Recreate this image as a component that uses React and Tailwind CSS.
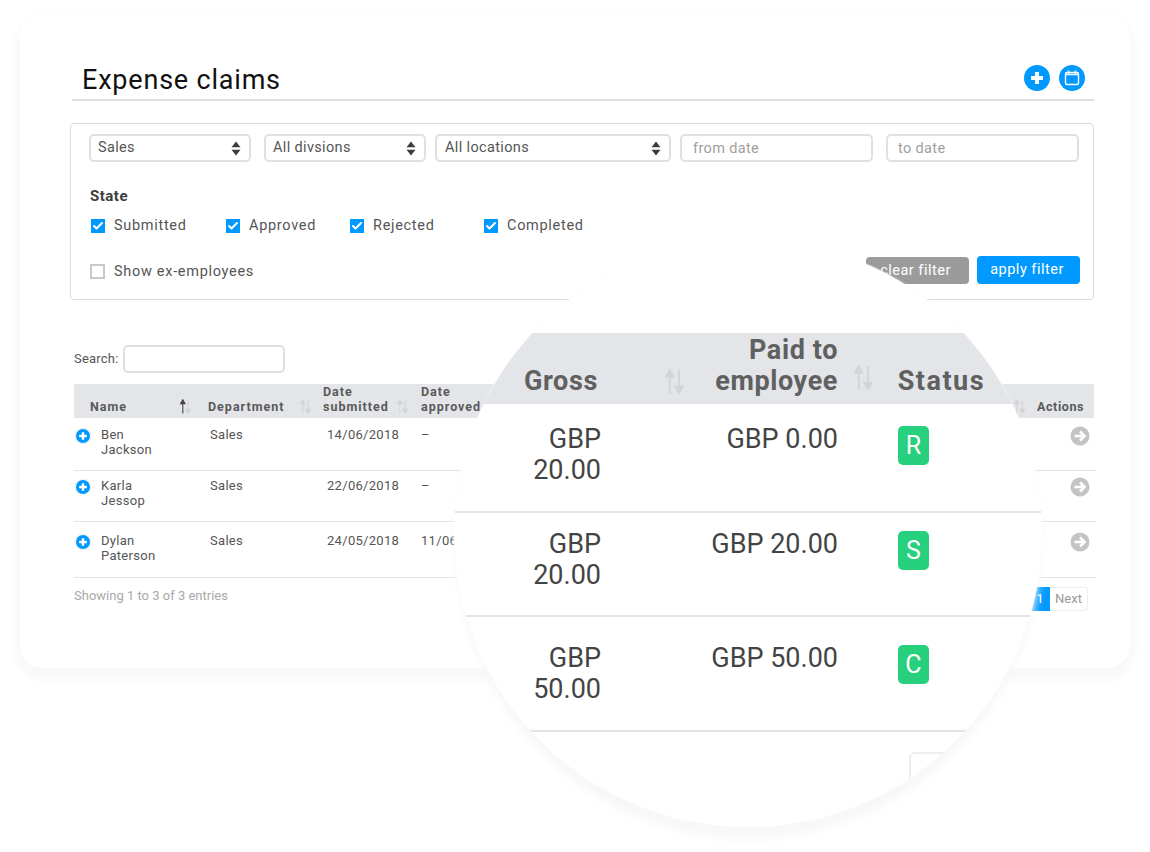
import { Check } from "lucide-react";

const font = { fontFamily: "Roboto, 'Open Sans', sans-serif" };

function SelectArrows() {
  return (
    <svg width="10" height="15" viewBox="0 0 10 15" className="shrink-0">
      <path d="M5 0.5 L9.5 6.3 H0.5 Z M5 14.5 L0.5 8.7 H9.5 Z" fill="#3d3d3d" />
    </svg>
  );
}

function SortIcon({ size = 1, up = "#d2d4d6", down = "#d2d4d6" }) {
  return (
    <svg width={11 * size} height={15 * size} viewBox="0 0 11 15" className="shrink-0">
      <path d="M2.8 14.5 V3 M0.6 4.6 L2.8 0.8 L5 4.6 Z" stroke={up} strokeWidth="1.1" fill={up} />
      <path d="M8.2 0.5 V12 M6 10.4 L8.2 14.2 L10.4 10.4 Z" stroke={down} strokeWidth="1.1" fill={down} />
    </svg>
  );
}

function FakeSelect({ label, className }) {
  return (
    <div className={`flex h-[28px] items-center justify-between rounded-[5px] border-2 border-[#e0e0e0] pl-[7px] pr-[8px] text-[14.5px] tracking-[0.35px] text-[#555] ${className}`}>
      <span>{label}</span>
      <SelectArrows />
    </div>
  );
}

function Tick({ label, className }) {
  return (
    <div className={`flex items-center ${className}`}>
      <span className="flex h-[14px] w-[14px] items-center justify-center bg-[#0099ff]">
        <Check size={12} strokeWidth={4} color="white" />
      </span>
      <span className="ml-[9px] text-[14.5px] tracking-[0.7px] text-[#555]">{label}</span>
    </div>
  );
}

function RowPlus() {
  return (
    <svg width="18" height="18" viewBox="0 0 18 18" className="shrink-0">
      <circle cx="9" cy="9" r="8.5" fill="#f0f2f4" />
      <circle cx="9" cy="9" r="7" fill="#0099ff" />
      <path d="M9 5.2 V12.8 M5.2 9 H12.8" stroke="white" strokeWidth="2.4" />
    </svg>
  );
}

function RowArrow() {
  return (
    <svg width="20" height="20" viewBox="0 0 20 20">
      <circle cx="10" cy="10" r="9.5" fill="#c4c4c4" />
      <path d="M4.5 10 H14 M10 5.5 L14.5 10 L10 14.5" stroke="white" strokeWidth="2.6" fill="none" />
    </svg>
  );
}

const tableCols = "grid grid-cols-[134px_115px_98px_604px_1fr]";

const rows = [
  { first: "Ben", last: "Jackson", sub: "14/06/2018", appr: "–", h: "h-[53px] pt-[9px]" },
  { first: "Karla", last: "Jessop", sub: "22/06/2018", appr: "–", h: "h-[51px] pt-[7px]" },
  { first: "Dylan", last: "Paterson", sub: "24/05/2018", appr: "11/06/2018", h: "h-[56px] pt-[11px]" },
];

const zoomRows = [
  { gross: "20.00", paid: "GBP 0.00", state: "R", h: "h-[109px] pt-[20px]" },
  { gross: "20.00", paid: "GBP 20.00", state: "S", h: "h-[104px] pt-[16px]" },
  { gross: "50.00", paid: "GBP 50.00", state: "C", h: "h-[115px] pt-[26px]" },
];

function ExpenseCard() {
  return (
    <div className="ml-[20px] mt-[14px] h-[654px] w-[1110px] rounded-[24px] bg-white pl-[50px] pt-[44px] shadow-[0_7px_8px_5px_#f8f9f9]">
      {/* Header */}
      <div className="ml-[2px] flex h-[43px] w-[1022px] items-start justify-between border-b-2 border-[#dfdfdf] pl-[10px] pr-[9px]">
        <h1 className="text-[27px] leading-[44px] tracking-[0.8px] text-[#111]">Expense claims</h1>
        <div className="mt-[7px] flex gap-[9px]">
          <svg width="26" height="26" viewBox="0 0 26 26">
            <circle cx="13" cy="13" r="13" fill="#0099ff" />
            <path d="M13 7 V19 M7 13 H19" stroke="white" strokeWidth="4" />
          </svg>
          <svg width="26" height="26" viewBox="0 0 26 26">
            <circle cx="13" cy="13" r="13" fill="#0099ff" />
            <rect x="6.5" y="7.5" width="13" height="12" rx="1.5" stroke="white" strokeWidth="1.4" fill="none" />
            <path d="M9.5 5.5 V8.5 M16.5 5.5 V8.5 M6.5 9.5 H19.5" stroke="white" strokeWidth="1.4" />
          </svg>
        </div>
      </div>

      {/* Filters */}
      <div className="mt-[22px] h-[177px] w-[1024px] rounded-[4px] border border-[#dcdcdc] pl-[18px] pt-[10px]">
        <div className="flex">
          <FakeSelect label="Sales" className="w-[162px]" />
          <FakeSelect label="All divsions" className="ml-[13px] w-[162px]" />
          <FakeSelect label="All locations" className="ml-[9px] w-[236px] pl-[8px]" />
          <input placeholder="from date" className="ml-[9px] h-[28px] w-[193px] rounded-[5px] border-2 border-[#e0e0e0] px-[11px] text-[14.5px] tracking-[0.35px] placeholder:text-[#a0a0a0]" />
          <input placeholder="to date" className="ml-[13px] h-[28px] w-[193px] rounded-[5px] border-2 border-[#e0e0e0] px-[10px] text-[14.5px] tracking-[0.35px] placeholder:text-[#a0a0a0]" />
        </div>
        <div className="ml-px mt-[25px] text-[15px] font-bold leading-[18px] tracking-[0.5px] text-[#3d3d3d]">State</div>
        <div className="ml-[2px] mt-[11px] flex h-[20px]">
          <Tick label="Submitted" className="w-[135px]" />
          <Tick label="Approved" className="w-[124px]" />
          <Tick label="Rejected" className="w-[134px]" />
          <Tick label="Completed" />
        </div>
        <div className="flex items-start justify-between pr-[13px]">
          <div className="ml-px mt-[25px] flex items-center">
            <span className="h-[15px] w-[15px] border-2 border-[#c9c9c9]" />
            <span className="ml-[9px] text-[14.5px] tracking-[0.7px] text-[#555]">Show ex-employees</span>
          </div>
          <div className="mt-[20px] flex gap-[8px]">
            <button className="mt-px h-[27px] w-[103px] rounded-[4px] bg-[#9b9b9b] pr-[4px] text-[14.5px] tracking-[0.5px] text-white">clear filter</button>
            <button className="h-[28px] w-[103px] rounded-[4px] bg-[#0099ff] pr-[3px] text-[14.5px] tracking-[0.5px] text-white">apply filter</button>
          </div>
        </div>
      </div>

      {/* Table */}
      <div className="ml-[4px] mt-[45px] flex items-center">
        <span className="text-[13px] tracking-[0.2px] text-[#555]">Search:</span>
        <input className="ml-[5px] h-[28px] w-[162px] rounded-[5px] border-2 border-[#e0e0e0]" />
      </div>
      <div className="ml-[4px] mt-[11px] w-[1022px]">
        <div className={`${tableCols} h-[34px] w-[1020px] items-end bg-[#e3e5e9] pb-[4px] text-[12.5px] font-bold leading-[15px] tracking-[1px] text-[#5a5a5a]`}>
          <div className="flex items-center justify-between pl-[16px] pr-[17px]">
            <span>Name</span>
            <SortIcon up="#444" />
          </div>
          <div className="flex items-center justify-between pr-[12px]">
            <span>Department</span>
            <SortIcon />
          </div>
          <div className="flex items-end justify-between pr-[13px]">
            <span>Date<br />submitted</span>
            <SortIcon />
          </div>
          <div className="flex items-end justify-end">
            <span className="mr-auto">Date<br />approved</span>
            <SortIcon />
          </div>
          <div className="pl-[12px] tracking-[0.6px]">Actions</div>
        </div>
        {rows.map((row) => (
          <div key={row.first} className={`${tableCols} ${row.h} border-b border-[#e4e4e4] text-[13px] leading-[15px] tracking-[0.3px] text-[#555]`}>
            <div className="flex">
              <div className="ml-0"><RowPlus /></div>
              <div className="ml-[9px]">{row.first}<br />{row.last}</div>
            </div>
            <div className="pl-[2px]">Sales</div>
            <div className="pl-[4px]">{row.sub}</div>
            <div>{row.appr}</div>
            <div className="flex justify-end pr-[6px]"><div className="mt-[-1px]"><RowArrow /></div></div>
          </div>
        ))}
        <div className="mt-[9px] flex items-start justify-between pr-[8px]">
          <span className="mt-[-1px] text-[13px] text-[#a8a8a8]">Showing 1 to 3 of 3 entries</span>
          <div className="flex h-[24px] text-[13px] leading-[24px]">
            <span className="w-[20px] bg-[#0099ff] text-center text-white">1</span>
            <span className="w-[38px] rounded-r-[3px] border border-l-0 border-[#efefef] text-center leading-[22px] text-[#999]">Next</span>
          </div>
        </div>
      </div>
    </div>
  );
}

function Magnifier() {
  return (
    <div className="absolute left-[454px] top-[239px] h-[588px] w-[588px] overflow-hidden rounded-full bg-white pt-[94px] shadow-[0_14px_10px_-2px_#f7f8f8,0_0_2px_#f6f8f8]">
      <div className="grid h-[71px] grid-cols-[147px_237px_1fr] items-end bg-[#e3e5e9] pb-[7px] text-[27px] font-bold leading-[31px] tracking-[0.6px] text-[#606060]">
        <div className="pl-[70px]">Gross</div>
        <div className="flex items-end justify-between pl-[64px] text-right">
          <div className="mb-[3px]"><SortIcon size={1.7} /></div>
          <span>Paid to<br />employee</span>
        </div>
        <div className="flex items-end">
          <div className="mb-[7px] ml-[16px]"><SortIcon size={1.7} /></div>
          <span className="ml-[25px] tracking-[1.5px]">Status</span>
        </div>
      </div>
      {zoomRows.map((row) => (
        <div key={row.state} className={`grid grid-cols-[147px_237px_1fr] ${row.h} border-b-2 border-[#e2e4e6] text-[27px] leading-[31px] text-[#444]`}>
          <div className="text-right">GBP<br />{row.gross}</div>
          <div className="text-right">{row.paid}</div>
          <div className="pl-[60px]">
            <div className="mt-[2px] flex h-[39px] w-[31px] items-center justify-center rounded-[5px] bg-[#26d07c] text-[25px] text-white">{row.state}</div>
          </div>
        </div>
      ))}
      <div className="absolute left-[455px] top-[513px] h-[60px] w-[80px] rounded-[6px] border-2 border-[#eeeeee]" />
    </div>
  );
}

export default function App() {
  return (
    <div className="relative h-[852px] w-[1150px] overflow-hidden bg-white" style={font}>
      <div className="h-px" />
      <div className="mt-[-1px]">
        <ExpenseCard />
      </div>
      <Magnifier />
    </div>
  );
}
